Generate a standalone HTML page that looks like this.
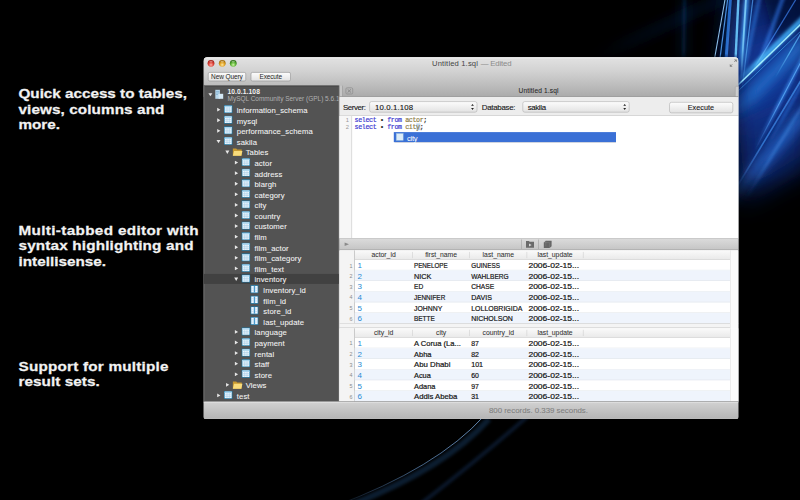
<!DOCTYPE html>
<html><head><meta charset="utf-8">
<style>
*{margin:0;padding:0}
html,body{width:800px;height:500px;overflow:hidden;background:#000}
svg{display:block;font-family:"Liberation Sans",sans-serif}
</style></head><body>
<svg width="800" height="500" viewBox="0 0 800 500">
<defs>
<linearGradient id="gTitle" x1="0" y1="0" x2="0" y2="1">
 <stop offset="0" stop-color="#e2e2e2"/><stop offset="0.35" stop-color="#d2d2d2"/><stop offset="0.7" stop-color="#bdbdbd"/><stop offset="1" stop-color="#aaaaaa"/>
</linearGradient>
<linearGradient id="gStatus" x1="0" y1="0" x2="0" y2="1">
 <stop offset="0" stop-color="#d2d2d2"/><stop offset="1" stop-color="#b4b4b4"/>
</linearGradient>
<linearGradient id="gDiv" x1="0" y1="0" x2="0" y2="1">
 <stop offset="0" stop-color="#dcdcdc"/><stop offset="1" stop-color="#c4c4c4"/>
</linearGradient>
<linearGradient id="gBtn" x1="0" y1="0" x2="0" y2="1">
 <stop offset="0" stop-color="#fdfdfd"/><stop offset="1" stop-color="#e2e2e2"/>
</linearGradient>
<linearGradient id="gRow" x1="0" y1="0" x2="0" y2="1">
 <stop offset="0" stop-color="#f4f4f4"/><stop offset="1" stop-color="#e6e6e6"/>
</linearGradient>
<linearGradient id="gHdr" x1="0" y1="0" x2="0" y2="1">
 <stop offset="0" stop-color="#fafafa"/><stop offset="1" stop-color="#e9e9e9"/>
</linearGradient>
<clipPath id="winclip"><path d="M207.5 57.2 H734.5 Q738.5 57.2 738.5 61.2 V416.9 Q738.5 418.9 736.5 418.9 H205.5 Q203.5 418.9 203.5 416.9 V61.2 Q203.5 57.2 207.5 57.2 Z"/></clipPath>
</defs>

<defs>
<radialGradient id="mk" cx="775" cy="60" r="200" gradientUnits="userSpaceOnUse" gradientTransform="translate(775 60) scale(1 1.05) translate(-775 -60)">
 <stop offset="0" stop-color="#fff"/><stop offset="0.55" stop-color="#fff"/><stop offset="1" stop-color="#000"/>
</radialGradient>
<mask id="bgmask" maskUnits="userSpaceOnUse" x="0" y="0" width="800" height="500"><rect x="560" y="0" width="240" height="300" fill="url(#mk)"/></mask>
<filter id="bl1" filterUnits="userSpaceOnUse" x="0" y="0" width="800" height="500"><feGaussianBlur stdDeviation="0.5"/></filter>
<filter id="bl2" filterUnits="userSpaceOnUse" x="0" y="0" width="800" height="500"><feGaussianBlur stdDeviation="1.8"/></filter>
<filter id="bl3" filterUnits="userSpaceOnUse" x="0" y="0" width="800" height="500"><feGaussianBlur stdDeviation="6"/></filter>
<filter id="bl4" filterUnits="userSpaceOnUse" x="0" y="0" width="800" height="500"><feGaussianBlur stdDeviation="12"/></filter>
</defs>
<g id="bg" mask="url(#bgmask)">
<path d="M732 -10 L810 -10 L810 150 L745 190 L738 120 L725 60 Z" fill="#0a2670" filter="url(#bl4)"/>
<path d="M740 40 L810 20 L810 100 L740 140 Z" fill="#1240a8" filter="url(#bl4)" opacity="0.6"/>
<path d="M739 120 L810 90 L810 170 L739 210 Z" fill="#0c2a78" filter="url(#bl4)" opacity="0.5"/>
<path d="M762 -10 L810 -10 L810 22 L775 40 Z" fill="#040c30" filter="url(#bl3)" opacity="0.75"/>
<linearGradient id="sg1" gradientUnits="userSpaceOnUse" x1="806" y1="112" x2="720" y2="212"><stop offset="0" stop-color="#2a6ae0" stop-opacity="0.75"/><stop offset="0.2" stop-color="#2a6ae0" stop-opacity="0.75"/><stop offset="0.5" stop-color="#2a6ae0" stop-opacity="0.75"/><stop offset="1" stop-color="#2a6ae0" stop-opacity="0"/></linearGradient>
<path d="M806 112 L720 212" stroke="url(#sg1)" stroke-width="9" fill="none" filter="url(#bl3)" style="mix-blend-mode:screen"/>
<linearGradient id="sg2" gradientUnits="userSpaceOnUse" x1="806" y1="40" x2="730" y2="118"><stop offset="0" stop-color="#1e78e0" stop-opacity="0.6"/><stop offset="0.15" stop-color="#1e78e0" stop-opacity="0.6"/><stop offset="0.7" stop-color="#1e78e0" stop-opacity="0.6"/><stop offset="1" stop-color="#1e78e0" stop-opacity="0"/></linearGradient>
<path d="M806 40 L730 118" stroke="url(#sg2)" stroke-width="12" fill="none" filter="url(#bl3)" style="mix-blend-mode:screen"/>
<linearGradient id="sg3" gradientUnits="userSpaceOnUse" x1="742" y1="-5" x2="728" y2="75"><stop offset="0" stop-color="#2a70f0" stop-opacity="0.35"/><stop offset="0.15" stop-color="#2a70f0" stop-opacity="0.35"/><stop offset="0.7" stop-color="#2a70f0" stop-opacity="0.35"/><stop offset="1" stop-color="#2a70f0" stop-opacity="0"/></linearGradient>
<path d="M742 -5 L728 75" stroke="url(#sg3)" stroke-width="7" fill="none" filter="url(#bl3)" style="mix-blend-mode:screen"/>
<linearGradient id="sg4" gradientUnits="userSpaceOnUse" x1="684.5" y1="-2" x2="683.5" y2="60"><stop offset="0" stop-color="#1a4490" stop-opacity="0.4"/><stop offset="0.2" stop-color="#1a4490" stop-opacity="0.4"/><stop offset="0.9" stop-color="#1a4490" stop-opacity="0.4"/><stop offset="1" stop-color="#1a4490" stop-opacity="0"/></linearGradient>
<path d="M684.5 -2 L683.5 60" stroke="url(#sg4)" stroke-width="4" fill="none" filter="url(#bl3)" style="mix-blend-mode:screen"/>
<linearGradient id="sg5" gradientUnits="userSpaceOnUse" x1="684.5" y1="-2" x2="683.5" y2="60"><stop offset="0" stop-color="#12346e" stop-opacity="0.5"/><stop offset="0.2" stop-color="#12346e" stop-opacity="0.5"/><stop offset="0.9" stop-color="#12346e" stop-opacity="0.5"/><stop offset="1" stop-color="#12346e" stop-opacity="0"/></linearGradient>
<path d="M684.5 -2 L683.5 60" stroke="url(#sg5)" stroke-width="2" fill="none" filter="url(#bl2)" style="mix-blend-mode:screen"/>
<linearGradient id="sg6" gradientUnits="userSpaceOnUse" x1="728" y1="-4" x2="585" y2="62"><stop offset="0" stop-color="#0e2a62" stop-opacity="0.6"/><stop offset="0.3" stop-color="#0e2a62" stop-opacity="0.6"/><stop offset="0.7" stop-color="#0e2a62" stop-opacity="0.6"/><stop offset="1" stop-color="#0e2a62" stop-opacity="0"/></linearGradient>
<path d="M728 -4 L585 62" stroke="url(#sg6)" stroke-width="5" fill="none" filter="url(#bl3)" style="mix-blend-mode:screen"/>
<linearGradient id="sg7" gradientUnits="userSpaceOnUse" x1="806" y1="16" x2="736" y2="84"><stop offset="0" stop-color="#3aa8ff" stop-opacity="0.8"/><stop offset="0.15" stop-color="#3aa8ff" stop-opacity="0.8"/><stop offset="0.7" stop-color="#3aa8ff" stop-opacity="0.8"/><stop offset="1" stop-color="#3aa8ff" stop-opacity="0"/></linearGradient>
<path d="M806 16 L736 84" stroke="url(#sg7)" stroke-width="6" fill="none" filter="url(#bl2)" style="mix-blend-mode:screen"/>
<linearGradient id="sg8" gradientUnits="userSpaceOnUse" x1="784" y1="-5" x2="755" y2="75"><stop offset="0" stop-color="#2a68e0" stop-opacity="0.6"/><stop offset="0.15" stop-color="#2a68e0" stop-opacity="0.6"/><stop offset="0.7" stop-color="#2a68e0" stop-opacity="0.6"/><stop offset="1" stop-color="#2a68e0" stop-opacity="0"/></linearGradient>
<path d="M784 -5 L755 75" stroke="url(#sg8)" stroke-width="4" fill="none" filter="url(#bl2)" style="mix-blend-mode:screen"/>
<linearGradient id="sg9" gradientUnits="userSpaceOnUse" x1="804" y1="55" x2="755" y2="150"><stop offset="0" stop-color="#2a70ea" stop-opacity="0.7"/><stop offset="0.2" stop-color="#2a70ea" stop-opacity="0.7"/><stop offset="0.55" stop-color="#2a70ea" stop-opacity="0.7"/><stop offset="1" stop-color="#2a70ea" stop-opacity="0"/></linearGradient>
<path d="M804 55 L755 150" stroke="url(#sg9)" stroke-width="3.5" fill="none" filter="url(#bl2)" style="mix-blend-mode:screen"/>
<linearGradient id="sg10" gradientUnits="userSpaceOnUse" x1="804" y1="80" x2="765" y2="150"><stop offset="0" stop-color="#2060d8" stop-opacity="0.5"/><stop offset="0.2" stop-color="#2060d8" stop-opacity="0.5"/><stop offset="0.5" stop-color="#2060d8" stop-opacity="0.5"/><stop offset="1" stop-color="#2060d8" stop-opacity="0"/></linearGradient>
<path d="M804 80 L765 150" stroke="url(#sg10)" stroke-width="3" fill="none" filter="url(#bl2)" style="mix-blend-mode:screen"/>
<linearGradient id="sg11" gradientUnits="userSpaceOnUse" x1="747" y1="-5" x2="740" y2="75"><stop offset="0" stop-color="#3a90ff" stop-opacity="0.7"/><stop offset="0.15" stop-color="#3a90ff" stop-opacity="0.7"/><stop offset="0.7" stop-color="#3a90ff" stop-opacity="0.7"/><stop offset="1" stop-color="#3a90ff" stop-opacity="0"/></linearGradient>
<path d="M747 -5 L740 75" stroke="url(#sg11)" stroke-width="5" fill="none" filter="url(#bl2)" style="mix-blend-mode:screen"/>
<linearGradient id="sg12" gradientUnits="userSpaceOnUse" x1="760" y1="-5" x2="742" y2="80"><stop offset="0" stop-color="#2a6ce0" stop-opacity="0.5"/><stop offset="0.15" stop-color="#2a6ce0" stop-opacity="0.5"/><stop offset="0.7" stop-color="#2a6ce0" stop-opacity="0.5"/><stop offset="1" stop-color="#2a6ce0" stop-opacity="0"/></linearGradient>
<path d="M760 -5 L742 80" stroke="url(#sg12)" stroke-width="4" fill="none" filter="url(#bl2)" style="mix-blend-mode:screen"/>
<linearGradient id="sg13" gradientUnits="userSpaceOnUse" x1="725.3" y1="-2" x2="714.3" y2="60"><stop offset="0" stop-color="#9ad0ff" stop-opacity="0.9"/><stop offset="0.2" stop-color="#9ad0ff" stop-opacity="0.9"/><stop offset="0.9" stop-color="#9ad0ff" stop-opacity="0.9"/><stop offset="1" stop-color="#9ad0ff" stop-opacity="0"/></linearGradient>
<path d="M725.3 -2 L714.3 60" stroke="url(#sg13)" stroke-width="1.1" fill="none" filter="url(#bl1)" style="mix-blend-mode:screen"/>
<linearGradient id="sg14" gradientUnits="userSpaceOnUse" x1="727.8" y1="-2" x2="719.8" y2="60"><stop offset="0" stop-color="#5aa0ff" stop-opacity="0.85"/><stop offset="0.2" stop-color="#5aa0ff" stop-opacity="0.85"/><stop offset="0.9" stop-color="#5aa0ff" stop-opacity="0.85"/><stop offset="1" stop-color="#5aa0ff" stop-opacity="0"/></linearGradient>
<path d="M727.8 -2 L719.8 60" stroke="url(#sg14)" stroke-width="1.2" fill="none" filter="url(#bl1)" style="mix-blend-mode:screen"/>
<linearGradient id="sg15" gradientUnits="userSpaceOnUse" x1="730.5" y1="-2" x2="726" y2="60"><stop offset="0" stop-color="#2a70e0" stop-opacity="0.8"/><stop offset="0.2" stop-color="#2a70e0" stop-opacity="0.8"/><stop offset="0.9" stop-color="#2a70e0" stop-opacity="0.8"/><stop offset="1" stop-color="#2a70e0" stop-opacity="0"/></linearGradient>
<path d="M730.5 -2 L726 60" stroke="url(#sg15)" stroke-width="3" fill="none" filter="url(#bl1)" style="mix-blend-mode:screen"/>
<linearGradient id="sg16" gradientUnits="userSpaceOnUse" x1="738.5" y1="-2" x2="735.5" y2="60"><stop offset="0" stop-color="#60c0ff" stop-opacity="0.9"/><stop offset="0.2" stop-color="#60c0ff" stop-opacity="0.9"/><stop offset="0.9" stop-color="#60c0ff" stop-opacity="0.9"/><stop offset="1" stop-color="#60c0ff" stop-opacity="0"/></linearGradient>
<path d="M738.5 -2 L735.5 60" stroke="url(#sg16)" stroke-width="2.4" fill="none" filter="url(#bl1)" style="mix-blend-mode:screen"/>
<linearGradient id="sg17" gradientUnits="userSpaceOnUse" x1="746" y1="-2" x2="741" y2="80"><stop offset="0" stop-color="#6ab8ff" stop-opacity="0.8"/><stop offset="0.2" stop-color="#6ab8ff" stop-opacity="0.8"/><stop offset="0.5" stop-color="#6ab8ff" stop-opacity="0.8"/><stop offset="1" stop-color="#6ab8ff" stop-opacity="0"/></linearGradient>
<path d="M746 -2 L741 80" stroke="url(#sg17)" stroke-width="1.8" fill="none" filter="url(#bl1)" style="mix-blend-mode:screen"/>
<linearGradient id="sg18" gradientUnits="userSpaceOnUse" x1="753" y1="-2" x2="742" y2="90"><stop offset="0" stop-color="#4a98ff" stop-opacity="0.7"/><stop offset="0.2" stop-color="#4a98ff" stop-opacity="0.7"/><stop offset="0.5" stop-color="#4a98ff" stop-opacity="0.7"/><stop offset="1" stop-color="#4a98ff" stop-opacity="0"/></linearGradient>
<path d="M753 -2 L742 90" stroke="url(#sg18)" stroke-width="1.2" fill="none" filter="url(#bl1)" style="mix-blend-mode:screen"/>
<linearGradient id="sg19" gradientUnits="userSpaceOnUse" x1="798" y1="-4" x2="750" y2="75"><stop offset="0" stop-color="#3a78f0" stop-opacity="0.7"/><stop offset="0.2" stop-color="#3a78f0" stop-opacity="0.7"/><stop offset="0.65" stop-color="#3a78f0" stop-opacity="0.7"/><stop offset="1" stop-color="#3a78f0" stop-opacity="0"/></linearGradient>
<path d="M798 -4 L750 75" stroke="url(#sg19)" stroke-width="1.2" fill="none" filter="url(#bl1)" style="mix-blend-mode:screen"/>
<linearGradient id="sg20" gradientUnits="userSpaceOnUse" x1="804" y1="21" x2="736" y2="87"><stop offset="0" stop-color="#90e0ff" stop-opacity="0.95"/><stop offset="0.2" stop-color="#90e0ff" stop-opacity="0.95"/><stop offset="0.9" stop-color="#90e0ff" stop-opacity="0.95"/><stop offset="1" stop-color="#90e0ff" stop-opacity="0"/></linearGradient>
<path d="M804 21 L736 87" stroke="url(#sg20)" stroke-width="1.5" fill="none" filter="url(#bl1)" style="mix-blend-mode:screen"/>
<linearGradient id="sg21" gradientUnits="userSpaceOnUse" x1="804" y1="28" x2="736" y2="93"><stop offset="0" stop-color="#3a9cf0" stop-opacity="0.6"/><stop offset="0.2" stop-color="#3a9cf0" stop-opacity="0.6"/><stop offset="0.9" stop-color="#3a9cf0" stop-opacity="0.6"/><stop offset="1" stop-color="#3a9cf0" stop-opacity="0"/></linearGradient>
<path d="M804 28 L736 93" stroke="url(#sg21)" stroke-width="0.9" fill="none" filter="url(#bl1)" style="mix-blend-mode:screen"/>
<linearGradient id="sg22" gradientUnits="userSpaceOnUse" x1="804" y1="28" x2="775" y2="78"><stop offset="0" stop-color="#4aa0ff" stop-opacity="0.7"/><stop offset="0.2" stop-color="#4aa0ff" stop-opacity="0.7"/><stop offset="0.5" stop-color="#4aa0ff" stop-opacity="0.7"/><stop offset="1" stop-color="#4aa0ff" stop-opacity="0"/></linearGradient>
<path d="M804 28 L775 78" stroke="url(#sg22)" stroke-width="1.2" fill="none" filter="url(#bl1)" style="mix-blend-mode:screen"/>
<linearGradient id="sg23" gradientUnits="userSpaceOnUse" x1="803" y1="58" x2="755" y2="150"><stop offset="0" stop-color="#4a8cff" stop-opacity="0.7"/><stop offset="0.15" stop-color="#4a8cff" stop-opacity="0.7"/><stop offset="0.5" stop-color="#4a8cff" stop-opacity="0.7"/><stop offset="1" stop-color="#4a8cff" stop-opacity="0"/></linearGradient>
<path d="M803 58 L755 150" stroke="url(#sg23)" stroke-width="1.1" fill="none" filter="url(#bl1)" style="mix-blend-mode:screen"/>
<linearGradient id="sg24" gradientUnits="userSpaceOnUse" x1="806" y1="72" x2="735" y2="190"><stop offset="0" stop-color="#3a80f0" stop-opacity="0.65"/><stop offset="0.2" stop-color="#3a80f0" stop-opacity="0.65"/><stop offset="0.6" stop-color="#3a80f0" stop-opacity="0.65"/><stop offset="1" stop-color="#3a80f0" stop-opacity="0"/></linearGradient>
<path d="M806 72 L735 190" stroke="url(#sg24)" stroke-width="1.6" fill="none" filter="url(#bl1)" style="mix-blend-mode:screen"/>
<linearGradient id="sg25" gradientUnits="userSpaceOnUse" x1="806" y1="100" x2="745" y2="200"><stop offset="0" stop-color="#2a6ad8" stop-opacity="0.55"/><stop offset="0.2" stop-color="#2a6ad8" stop-opacity="0.55"/><stop offset="0.6" stop-color="#2a6ad8" stop-opacity="0.55"/><stop offset="1" stop-color="#2a6ad8" stop-opacity="0"/></linearGradient>
<path d="M806 100 L745 200" stroke="url(#sg25)" stroke-width="2.2" fill="none" filter="url(#bl2)" style="mix-blend-mode:screen"/>
</g>
<linearGradient id="bsg" gradientUnits="userSpaceOnUse" x1="340" y1="500" x2="486" y2="416"><stop offset="0" stop-color="#5a88c0" stop-opacity="0.1"/><stop offset="0.5" stop-color="#6a9ad0" stop-opacity="0.7"/><stop offset="1" stop-color="#78a8dc" stop-opacity="0.95"/></linearGradient>
<path d="M335 506 Q437 468 484 416" stroke="#24548a" stroke-width="6" fill="none" opacity="0.35" filter="url(#bl2)" transform="translate(5,3)"/>
<path d="M335 506 Q437 468 484 416" stroke="url(#bsg)" stroke-width="0.9" fill="none" filter="url(#bl1)"/>
<path d="M418 506 Q480 458 528 416" stroke="#163a6a" stroke-width="4" fill="none" opacity="0.4" filter="url(#bl2)"/>
<g transform="translate(18.5,97.5) scale(1.14,1)">
<text x="0" y="0" font-size="13.4" fill="#f2f2f2" font-weight="bold" textLength="147.72" lengthAdjust="spacing" stroke="#f2f2f2" stroke-width="0.25">Quick access to tables,</text>
</g>
<g transform="translate(18.5,113.5) scale(1.14,1)">
<text x="0" y="0" font-size="13.4" fill="#f2f2f2" font-weight="bold" textLength="127.98" lengthAdjust="spacing" stroke="#f2f2f2" stroke-width="0.25">views, columns and</text>
</g>
<g transform="translate(18.5,129.4) scale(1.14,1)">
<text x="0" y="0" font-size="13.4" fill="#f2f2f2" font-weight="bold" textLength="36.4" lengthAdjust="spacing" stroke="#f2f2f2" stroke-width="0.25">more.</text>
</g>
<g transform="translate(18.5,234.5) scale(1.14,1)">
<text x="0" y="0" font-size="13.4" fill="#f2f2f2" font-weight="bold" textLength="157.89" lengthAdjust="spacing" stroke="#f2f2f2" stroke-width="0.25">Multi-tabbed editor with</text>
</g>
<g transform="translate(18.5,250) scale(1.14,1)">
<text x="0" y="0" font-size="13.4" fill="#f2f2f2" font-weight="bold" textLength="153.51" lengthAdjust="spacing" stroke="#f2f2f2" stroke-width="0.25">syntax highlighting and</text>
</g>
<g transform="translate(18.5,266) scale(1.14,1)">
<text x="0" y="0" font-size="13.4" fill="#f2f2f2" font-weight="bold" textLength="76.75" lengthAdjust="spacing" stroke="#f2f2f2" stroke-width="0.25">intellisense.</text>
</g>
<g transform="translate(18.5,370.75) scale(1.14,1)">
<text x="0" y="0" font-size="13.4" fill="#f2f2f2" font-weight="bold" textLength="131.58" lengthAdjust="spacing" stroke="#f2f2f2" stroke-width="0.25">Support for multiple</text>
</g>
<g transform="translate(18.5,386) scale(1.14,1)">
<text x="0" y="0" font-size="13.4" fill="#f2f2f2" font-weight="bold" textLength="71.27" lengthAdjust="spacing" stroke="#f2f2f2" stroke-width="0.25">result sets.</text>
</g>
<g clip-path="url(#winclip)">
<rect x="203.5" y="57.2" width="535.0" height="361.7" fill="#fff"/>
<rect x="203.5" y="57.2" width="535.0" height="39.8" fill="url(#gTitle)"/>
<rect x="203.5" y="57.2" width="535.0" height="1.1" fill="#f6f6f6"/>
<radialGradient id="tl0" cx="0.5" cy="0.72" r="0.62"><stop offset="0" stop-color="#ffb0a8"/><stop offset="0.55" stop-color="#e0463c"/><stop offset="1" stop-color="#a41e16"/></radialGradient>
<circle cx="211" cy="63.3" r="3.4" fill="url(#tl0)"/><ellipse cx="211" cy="61.6" rx="1.6" ry="0.9" fill="#fff" opacity="0.35"/>
<radialGradient id="tl1" cx="0.5" cy="0.72" r="0.62"><stop offset="0" stop-color="#ffe8a0"/><stop offset="0.55" stop-color="#e2a428"/><stop offset="1" stop-color="#a26c0c"/></radialGradient>
<circle cx="222.25" cy="63.3" r="3.4" fill="url(#tl1)"/><ellipse cx="222.25" cy="61.6" rx="1.6" ry="0.9" fill="#fff" opacity="0.35"/>
<radialGradient id="tl2" cx="0.5" cy="0.72" r="0.62"><stop offset="0" stop-color="#d0f4a8"/><stop offset="0.55" stop-color="#62b83a"/><stop offset="1" stop-color="#2e7418"/></radialGradient>
<circle cx="233.25" cy="63.3" r="3.4" fill="url(#tl2)"/><ellipse cx="233.25" cy="61.6" rx="1.6" ry="0.9" fill="#fff" opacity="0.35"/>
<text x="432" y="65.9" font-size="7.6" fill="#444" textLength="45.9" lengthAdjust="spacing" >Untitled 1.sql</text>
<text x="480.7" y="65.9" font-size="7.8" fill="#8a8a8a" textLength="30.9" lengthAdjust="spacing" >— Edited</text>
<rect x="208.25" y="72.4" width="37.5" height="8.6" rx="1.5" fill="url(#gBtn)" stroke="#929292" stroke-width="0.6"/>
<text x="211.1" y="79.3" font-size="6.5" fill="#262626" textLength="31.6" lengthAdjust="spacing" >New Query</text>
<rect x="251" y="72.4" width="39.5" height="8.6" rx="1.5" fill="url(#gBtn)" stroke="#929292" stroke-width="0.6"/>
<text x="259.5" y="79.3" font-size="6.5" fill="#262626" textLength="22.5" lengthAdjust="spacing" >Execute</text>
<rect x="203.5" y="85.65" width="135.3" height="315.95000000000005" fill="#535353"/>
<rect x="203.5" y="85.65" width="135.3" height="0.6" fill="#333"/>
<rect x="203.5" y="85.65" width="1.3" height="315.95000000000005" fill="#636363"/>
<path d="M208.4 93.3 L212.4 93.3 L210.4 96.3 Z" fill="#e6e6e6"/>
<rect x="215.3" y="89.8" width="4.6" height="9" fill="#b8d8ec"/><rect x="218.6" y="93.8" width="4.6" height="5" fill="#d4e8f4"/><path d="M216 91.5h3.2M216 93h3.2M216 94.5h2" stroke="#6a9cc0" stroke-width="0.5"/>
<text x="227.5" y="93.9" font-size="6.7" fill="#f2f2f2" font-weight="bold" textLength="32.4" lengthAdjust="spacing" >10.0.1.108</text>
<text x="227.5" y="100.9" font-size="6.5" fill="#b0b0b0" textLength="112" lengthAdjust="spacing" >MySQL Community Server (GPL) 5.6.1</text>
<path d="M217.2 107.75 L220.39999999999998 109.65 L217.2 111.55000000000001 Z" fill="#e6e6e6"/>
<rect x="224.0" y="105.25" width="8.4" height="7.8" fill="#1a78a8"/><rect x="224.7" y="105.85" width="7" height="6.6" fill="#eef8ff"/><rect x="224.7" y="105.85" width="7" height="1.5" fill="#a8d4ee"/><path d="M227.0 107.35V112.45M229.3 107.35V112.45M224.7 109.05H231.7M224.7 110.75H231.7" stroke="#9cc6e2" stroke-width="0.5"/>
<text x="236.8" y="113.05000000000001" font-size="7.7" fill="#f2f2f2" letter-spacing="0.09" stroke="#f2f2f2" stroke-width="0.08">information_schema</text>
<path d="M217.2 118.33500000000001 L220.39999999999998 120.23500000000001 L217.2 122.13500000000002 Z" fill="#e6e6e6"/>
<rect x="224.0" y="115.83500000000001" width="8.4" height="7.8" fill="#1a78a8"/><rect x="224.7" y="116.435" width="7" height="6.6" fill="#eef8ff"/><rect x="224.7" y="116.435" width="7" height="1.5" fill="#a8d4ee"/><path d="M227.0 117.935V123.03500000000001M229.3 117.935V123.03500000000001M224.7 119.635H231.7M224.7 121.33500000000001H231.7" stroke="#9cc6e2" stroke-width="0.5"/>
<text x="236.8" y="123.63500000000002" font-size="7.7" fill="#f2f2f2" letter-spacing="0.09" stroke="#f2f2f2" stroke-width="0.08">mysql</text>
<path d="M217.2 128.92 L220.39999999999998 130.82 L217.2 132.72 Z" fill="#e6e6e6"/>
<rect x="224.0" y="126.41999999999999" width="8.4" height="7.8" fill="#1a78a8"/><rect x="224.7" y="127.01999999999998" width="7" height="6.6" fill="#eef8ff"/><rect x="224.7" y="127.01999999999998" width="7" height="1.5" fill="#a8d4ee"/><path d="M227.0 128.51999999999998V133.61999999999998M229.3 128.51999999999998V133.61999999999998M224.7 130.22H231.7M224.7 131.92H231.7" stroke="#9cc6e2" stroke-width="0.5"/>
<text x="236.8" y="134.22" font-size="7.7" fill="#f2f2f2" letter-spacing="0.09" stroke="#f2f2f2" stroke-width="0.08">performance_schema</text>
<path d="M216.5 140.005 L220.5 140.005 L218.5 143.305 Z" fill="#e6e6e6"/>
<rect x="224.0" y="137.005" width="8.4" height="7.8" fill="#1a78a8"/><rect x="224.7" y="137.605" width="7" height="6.6" fill="#eef8ff"/><rect x="224.7" y="137.605" width="7" height="1.5" fill="#a8d4ee"/><path d="M227.0 139.105V144.20499999999998M229.3 139.105V144.20499999999998M224.7 140.805H231.7M224.7 142.505H231.7" stroke="#9cc6e2" stroke-width="0.5"/>
<text x="236.8" y="144.805" font-size="7.7" fill="#f2f2f2" letter-spacing="0.09" stroke="#f2f2f2" stroke-width="0.08">sakila</text>
<path d="M225.35 150.59 L229.35 150.59 L227.35 153.89000000000001 Z" fill="#e6e6e6"/>
<path d="M232.85 148.59 h3.4 l0.9 1 h4.6 v6.2 h-8.9 Z" fill="#c89a30"/><path d="M234.04999999999998 150.99 h8.4 l-1.2 4.8 h-8.4 Z" fill="#f8dc7c"/>
<text x="245.65" y="155.39000000000001" font-size="7.7" fill="#f2f2f2" letter-spacing="0.09" stroke="#f2f2f2" stroke-width="0.08">Tables</text>
<path d="M234.89999999999998 160.675 L238.09999999999997 162.57500000000002 L234.89999999999998 164.47500000000002 Z" fill="#e6e6e6"/>
<rect x="241.7" y="158.175" width="8.4" height="7.8" fill="#1a78a8"/><rect x="242.39999999999998" y="158.775" width="7" height="6.6" fill="#eef8ff"/><rect x="242.39999999999998" y="158.775" width="7" height="1.5" fill="#a8d4ee"/><path d="M244.7 160.275V165.375M247.0 160.275V165.375M242.39999999999998 161.97500000000002H249.39999999999998M242.39999999999998 163.675H249.39999999999998" stroke="#9cc6e2" stroke-width="0.5"/>
<text x="254.5" y="165.97500000000002" font-size="7.7" fill="#f2f2f2" letter-spacing="0.09" stroke="#f2f2f2" stroke-width="0.08">actor</text>
<path d="M234.89999999999998 171.26000000000002 L238.09999999999997 173.16000000000003 L234.89999999999998 175.06000000000003 Z" fill="#e6e6e6"/>
<rect x="241.7" y="168.76000000000002" width="8.4" height="7.8" fill="#1a78a8"/><rect x="242.39999999999998" y="169.36" width="7" height="6.6" fill="#eef8ff"/><rect x="242.39999999999998" y="169.36" width="7" height="1.5" fill="#a8d4ee"/><path d="M244.7 170.86V175.96M247.0 170.86V175.96M242.39999999999998 172.56000000000003H249.39999999999998M242.39999999999998 174.26000000000002H249.39999999999998" stroke="#9cc6e2" stroke-width="0.5"/>
<text x="254.5" y="176.56000000000003" font-size="7.7" fill="#f2f2f2" letter-spacing="0.09" stroke="#f2f2f2" stroke-width="0.08">address</text>
<path d="M234.89999999999998 181.845 L238.09999999999997 183.745 L234.89999999999998 185.645 Z" fill="#e6e6e6"/>
<rect x="241.7" y="179.345" width="8.4" height="7.8" fill="#1a78a8"/><rect x="242.39999999999998" y="179.945" width="7" height="6.6" fill="#eef8ff"/><rect x="242.39999999999998" y="179.945" width="7" height="1.5" fill="#a8d4ee"/><path d="M244.7 181.445V186.545M247.0 181.445V186.545M242.39999999999998 183.145H249.39999999999998M242.39999999999998 184.845H249.39999999999998" stroke="#9cc6e2" stroke-width="0.5"/>
<text x="254.5" y="187.145" font-size="7.7" fill="#f2f2f2" letter-spacing="0.09" stroke="#f2f2f2" stroke-width="0.08">blargh</text>
<path d="M234.89999999999998 192.43 L238.09999999999997 194.33 L234.89999999999998 196.23000000000002 Z" fill="#e6e6e6"/>
<rect x="241.7" y="189.93" width="8.4" height="7.8" fill="#1a78a8"/><rect x="242.39999999999998" y="190.53" width="7" height="6.6" fill="#eef8ff"/><rect x="242.39999999999998" y="190.53" width="7" height="1.5" fill="#a8d4ee"/><path d="M244.7 192.03V197.13M247.0 192.03V197.13M242.39999999999998 193.73000000000002H249.39999999999998M242.39999999999998 195.43H249.39999999999998" stroke="#9cc6e2" stroke-width="0.5"/>
<text x="254.5" y="197.73000000000002" font-size="7.7" fill="#f2f2f2" letter-spacing="0.09" stroke="#f2f2f2" stroke-width="0.08">category</text>
<path d="M234.89999999999998 203.01500000000001 L238.09999999999997 204.91500000000002 L234.89999999999998 206.81500000000003 Z" fill="#e6e6e6"/>
<rect x="241.7" y="200.51500000000001" width="8.4" height="7.8" fill="#1a78a8"/><rect x="242.39999999999998" y="201.115" width="7" height="6.6" fill="#eef8ff"/><rect x="242.39999999999998" y="201.115" width="7" height="1.5" fill="#a8d4ee"/><path d="M244.7 202.615V207.715M247.0 202.615V207.715M242.39999999999998 204.31500000000003H249.39999999999998M242.39999999999998 206.01500000000001H249.39999999999998" stroke="#9cc6e2" stroke-width="0.5"/>
<text x="254.5" y="208.31500000000003" font-size="7.7" fill="#f2f2f2" letter-spacing="0.09" stroke="#f2f2f2" stroke-width="0.08">city</text>
<path d="M234.89999999999998 213.6 L238.09999999999997 215.5 L234.89999999999998 217.4 Z" fill="#e6e6e6"/>
<rect x="241.7" y="211.1" width="8.4" height="7.8" fill="#1a78a8"/><rect x="242.39999999999998" y="211.7" width="7" height="6.6" fill="#eef8ff"/><rect x="242.39999999999998" y="211.7" width="7" height="1.5" fill="#a8d4ee"/><path d="M244.7 213.2V218.29999999999998M247.0 213.2V218.29999999999998M242.39999999999998 214.9H249.39999999999998M242.39999999999998 216.6H249.39999999999998" stroke="#9cc6e2" stroke-width="0.5"/>
<text x="254.5" y="218.9" font-size="7.7" fill="#f2f2f2" letter-spacing="0.09" stroke="#f2f2f2" stroke-width="0.08">country</text>
<path d="M234.89999999999998 224.185 L238.09999999999997 226.085 L234.89999999999998 227.985 Z" fill="#e6e6e6"/>
<rect x="241.7" y="221.685" width="8.4" height="7.8" fill="#1a78a8"/><rect x="242.39999999999998" y="222.285" width="7" height="6.6" fill="#eef8ff"/><rect x="242.39999999999998" y="222.285" width="7" height="1.5" fill="#a8d4ee"/><path d="M244.7 223.785V228.885M247.0 223.785V228.885M242.39999999999998 225.485H249.39999999999998M242.39999999999998 227.185H249.39999999999998" stroke="#9cc6e2" stroke-width="0.5"/>
<text x="254.5" y="229.485" font-size="7.7" fill="#f2f2f2" letter-spacing="0.09" stroke="#f2f2f2" stroke-width="0.08">customer</text>
<path d="M234.89999999999998 234.77 L238.09999999999997 236.67000000000002 L234.89999999999998 238.57000000000002 Z" fill="#e6e6e6"/>
<rect x="241.7" y="232.27" width="8.4" height="7.8" fill="#1a78a8"/><rect x="242.39999999999998" y="232.87" width="7" height="6.6" fill="#eef8ff"/><rect x="242.39999999999998" y="232.87" width="7" height="1.5" fill="#a8d4ee"/><path d="M244.7 234.37V239.47M247.0 234.37V239.47M242.39999999999998 236.07000000000002H249.39999999999998M242.39999999999998 237.77H249.39999999999998" stroke="#9cc6e2" stroke-width="0.5"/>
<text x="254.5" y="240.07000000000002" font-size="7.7" fill="#f2f2f2" letter-spacing="0.09" stroke="#f2f2f2" stroke-width="0.08">film</text>
<path d="M234.89999999999998 245.35500000000002 L238.09999999999997 247.25500000000002 L234.89999999999998 249.15500000000003 Z" fill="#e6e6e6"/>
<rect x="241.7" y="242.85500000000002" width="8.4" height="7.8" fill="#1a78a8"/><rect x="242.39999999999998" y="243.455" width="7" height="6.6" fill="#eef8ff"/><rect x="242.39999999999998" y="243.455" width="7" height="1.5" fill="#a8d4ee"/><path d="M244.7 244.955V250.055M247.0 244.955V250.055M242.39999999999998 246.65500000000003H249.39999999999998M242.39999999999998 248.35500000000002H249.39999999999998" stroke="#9cc6e2" stroke-width="0.5"/>
<text x="254.5" y="250.65500000000003" font-size="7.7" fill="#f2f2f2" letter-spacing="0.09" stroke="#f2f2f2" stroke-width="0.08">film_actor</text>
<path d="M234.89999999999998 255.94000000000003 L238.09999999999997 257.84000000000003 L234.89999999999998 259.74 Z" fill="#e6e6e6"/>
<rect x="241.7" y="253.44000000000003" width="8.4" height="7.8" fill="#1a78a8"/><rect x="242.39999999999998" y="254.04000000000002" width="7" height="6.6" fill="#eef8ff"/><rect x="242.39999999999998" y="254.04000000000002" width="7" height="1.5" fill="#a8d4ee"/><path d="M244.7 255.54000000000002V260.64000000000004M247.0 255.54000000000002V260.64000000000004M242.39999999999998 257.24H249.39999999999998M242.39999999999998 258.94000000000005H249.39999999999998" stroke="#9cc6e2" stroke-width="0.5"/>
<text x="254.5" y="261.24" font-size="7.7" fill="#f2f2f2" letter-spacing="0.09" stroke="#f2f2f2" stroke-width="0.08">film_category</text>
<path d="M234.89999999999998 266.52500000000003 L238.09999999999997 268.425 L234.89999999999998 270.325 Z" fill="#e6e6e6"/>
<rect x="241.7" y="264.02500000000003" width="8.4" height="7.8" fill="#1a78a8"/><rect x="242.39999999999998" y="264.62500000000006" width="7" height="6.6" fill="#eef8ff"/><rect x="242.39999999999998" y="264.62500000000006" width="7" height="1.5" fill="#a8d4ee"/><path d="M244.7 266.12500000000006V271.225M247.0 266.12500000000006V271.225M242.39999999999998 267.82500000000005H249.39999999999998M242.39999999999998 269.52500000000003H249.39999999999998" stroke="#9cc6e2" stroke-width="0.5"/>
<text x="254.5" y="271.825" font-size="7.7" fill="#f2f2f2" letter-spacing="0.09" stroke="#f2f2f2" stroke-width="0.08">film_text</text>
<rect x="203.5" y="273.90999999999997" width="135.3" height="9.985000000000001" fill="#414141"/>
<path d="M234.2 277.61 L238.2 277.61 L236.2 280.90999999999997 Z" fill="#e6e6e6"/>
<rect x="241.7" y="274.61" width="8.4" height="7.8" fill="#1a78a8"/><rect x="242.39999999999998" y="275.21000000000004" width="7" height="6.6" fill="#eef8ff"/><rect x="242.39999999999998" y="275.21000000000004" width="7" height="1.5" fill="#a8d4ee"/><path d="M244.7 276.71000000000004V281.81M247.0 276.71000000000004V281.81M242.39999999999998 278.41H249.39999999999998M242.39999999999998 280.11H249.39999999999998" stroke="#9cc6e2" stroke-width="0.5"/>
<text x="254.5" y="282.40999999999997" font-size="7.7" fill="#f2f2f2" letter-spacing="0.09" stroke="#f2f2f2" stroke-width="0.08">inventory</text>
<rect x="250.55" y="285.19500000000005" width="7.8" height="8" fill="#1a78a8"/><rect x="251.25" y="285.89500000000004" width="6.4" height="6.6" fill="#f0f8ff"/><rect x="253.75" y="285.89500000000004" width="1.4" height="6.6" fill="#4a98cc"/><path d="M251.25 288.095H253.75M251.25 290.2950000000001H253.75M255.15 288.095H257.65000000000003M255.15 290.2950000000001H257.65000000000003" stroke="#a8cce6" stroke-width="0.5"/>
<text x="263.35" y="292.995" font-size="7.7" fill="#f2f2f2" letter-spacing="0.09" stroke="#f2f2f2" stroke-width="0.08">inventory_id</text>
<rect x="250.55" y="295.7800000000001" width="7.8" height="8" fill="#1a78a8"/><rect x="251.25" y="296.4800000000001" width="6.4" height="6.6" fill="#f0f8ff"/><rect x="253.75" y="296.4800000000001" width="1.4" height="6.6" fill="#4a98cc"/><path d="M251.25 298.68000000000006H253.75M251.25 300.8800000000001H253.75M255.15 298.68000000000006H257.65000000000003M255.15 300.8800000000001H257.65000000000003" stroke="#a8cce6" stroke-width="0.5"/>
<text x="263.35" y="303.58000000000004" font-size="7.7" fill="#f2f2f2" letter-spacing="0.09" stroke="#f2f2f2" stroke-width="0.08">film_id</text>
<rect x="250.55" y="306.365" width="7.8" height="8" fill="#1a78a8"/><rect x="251.25" y="307.065" width="6.4" height="6.6" fill="#f0f8ff"/><rect x="253.75" y="307.065" width="1.4" height="6.6" fill="#4a98cc"/><path d="M251.25 309.265H253.75M251.25 311.46500000000003H253.75M255.15 309.265H257.65000000000003M255.15 311.46500000000003H257.65000000000003" stroke="#a8cce6" stroke-width="0.5"/>
<text x="263.35" y="314.16499999999996" font-size="7.7" fill="#f2f2f2" letter-spacing="0.09" stroke="#f2f2f2" stroke-width="0.08">store_id</text>
<rect x="250.55" y="316.95000000000005" width="7.8" height="8" fill="#1a78a8"/><rect x="251.25" y="317.65000000000003" width="6.4" height="6.6" fill="#f0f8ff"/><rect x="253.75" y="317.65000000000003" width="1.4" height="6.6" fill="#4a98cc"/><path d="M251.25 319.85H253.75M251.25 322.05000000000007H253.75M255.15 319.85H257.65000000000003M255.15 322.05000000000007H257.65000000000003" stroke="#a8cce6" stroke-width="0.5"/>
<text x="263.35" y="324.75" font-size="7.7" fill="#f2f2f2" letter-spacing="0.09" stroke="#f2f2f2" stroke-width="0.08">last_update</text>
<path d="M234.89999999999998 330.0350000000001 L238.09999999999997 331.93500000000006 L234.89999999999998 333.83500000000004 Z" fill="#e6e6e6"/>
<rect x="241.7" y="327.5350000000001" width="8.4" height="7.8" fill="#1a78a8"/><rect x="242.39999999999998" y="328.1350000000001" width="7" height="6.6" fill="#eef8ff"/><rect x="242.39999999999998" y="328.1350000000001" width="7" height="1.5" fill="#a8d4ee"/><path d="M244.7 329.6350000000001V334.73500000000007M247.0 329.6350000000001V334.73500000000007M242.39999999999998 331.3350000000001H249.39999999999998M242.39999999999998 333.0350000000001H249.39999999999998" stroke="#9cc6e2" stroke-width="0.5"/>
<text x="254.5" y="335.33500000000004" font-size="7.7" fill="#f2f2f2" letter-spacing="0.09" stroke="#f2f2f2" stroke-width="0.08">language</text>
<path d="M234.89999999999998 340.62 L238.09999999999997 342.52 L234.89999999999998 344.41999999999996 Z" fill="#e6e6e6"/>
<rect x="241.7" y="338.12" width="8.4" height="7.8" fill="#1a78a8"/><rect x="242.39999999999998" y="338.72" width="7" height="6.6" fill="#eef8ff"/><rect x="242.39999999999998" y="338.72" width="7" height="1.5" fill="#a8d4ee"/><path d="M244.7 340.22V345.32M247.0 340.22V345.32M242.39999999999998 341.92H249.39999999999998M242.39999999999998 343.62H249.39999999999998" stroke="#9cc6e2" stroke-width="0.5"/>
<text x="254.5" y="345.91999999999996" font-size="7.7" fill="#f2f2f2" letter-spacing="0.09" stroke="#f2f2f2" stroke-width="0.08">payment</text>
<path d="M234.89999999999998 351.20500000000004 L238.09999999999997 353.105 L234.89999999999998 355.005 Z" fill="#e6e6e6"/>
<rect x="241.7" y="348.70500000000004" width="8.4" height="7.8" fill="#1a78a8"/><rect x="242.39999999999998" y="349.30500000000006" width="7" height="6.6" fill="#eef8ff"/><rect x="242.39999999999998" y="349.30500000000006" width="7" height="1.5" fill="#a8d4ee"/><path d="M244.7 350.80500000000006V355.90500000000003M247.0 350.80500000000006V355.90500000000003M242.39999999999998 352.50500000000005H249.39999999999998M242.39999999999998 354.20500000000004H249.39999999999998" stroke="#9cc6e2" stroke-width="0.5"/>
<text x="254.5" y="356.505" font-size="7.7" fill="#f2f2f2" letter-spacing="0.09" stroke="#f2f2f2" stroke-width="0.08">rental</text>
<path d="M234.89999999999998 361.7900000000001 L238.09999999999997 363.69000000000005 L234.89999999999998 365.59000000000003 Z" fill="#e6e6e6"/>
<rect x="241.7" y="359.2900000000001" width="8.4" height="7.8" fill="#1a78a8"/><rect x="242.39999999999998" y="359.8900000000001" width="7" height="6.6" fill="#eef8ff"/><rect x="242.39999999999998" y="359.8900000000001" width="7" height="1.5" fill="#a8d4ee"/><path d="M244.7 361.3900000000001V366.49000000000007M247.0 361.3900000000001V366.49000000000007M242.39999999999998 363.0900000000001H249.39999999999998M242.39999999999998 364.7900000000001H249.39999999999998" stroke="#9cc6e2" stroke-width="0.5"/>
<text x="254.5" y="367.09000000000003" font-size="7.7" fill="#f2f2f2" letter-spacing="0.09" stroke="#f2f2f2" stroke-width="0.08">staff</text>
<path d="M234.89999999999998 372.375 L238.09999999999997 374.275 L234.89999999999998 376.17499999999995 Z" fill="#e6e6e6"/>
<rect x="241.7" y="369.875" width="8.4" height="7.8" fill="#1a78a8"/><rect x="242.39999999999998" y="370.475" width="7" height="6.6" fill="#eef8ff"/><rect x="242.39999999999998" y="370.475" width="7" height="1.5" fill="#a8d4ee"/><path d="M244.7 371.975V377.075M247.0 371.975V377.075M242.39999999999998 373.675H249.39999999999998M242.39999999999998 375.375H249.39999999999998" stroke="#9cc6e2" stroke-width="0.5"/>
<text x="254.5" y="377.67499999999995" font-size="7.7" fill="#f2f2f2" letter-spacing="0.09" stroke="#f2f2f2" stroke-width="0.08">store</text>
<path d="M226.04999999999998 382.96000000000004 L229.24999999999997 384.86 L226.04999999999998 386.76 Z" fill="#e6e6e6"/>
<path d="M232.85 381.46 h3.4 l0.9 1 h4.6 v6.2 h-8.9 Z" fill="#c89a30"/><path d="M234.04999999999998 383.86 h8.4 l-1.2 4.8 h-8.4 Z" fill="#f8dc7c"/>
<text x="245.65" y="388.26" font-size="7.7" fill="#f2f2f2" letter-spacing="0.09" stroke="#f2f2f2" stroke-width="0.08">Views</text>
<path d="M217.2 393.5450000000001 L220.39999999999998 395.44500000000005 L217.2 397.345 Z" fill="#e6e6e6"/>
<rect x="224.0" y="391.0450000000001" width="8.4" height="7.8" fill="#1a78a8"/><rect x="224.7" y="391.6450000000001" width="7" height="6.6" fill="#eef8ff"/><rect x="224.7" y="391.6450000000001" width="7" height="1.5" fill="#a8d4ee"/><path d="M227.0 393.1450000000001V398.24500000000006M229.3 393.1450000000001V398.24500000000006M224.7 394.8450000000001H231.7M224.7 396.5450000000001H231.7" stroke="#9cc6e2" stroke-width="0.5"/>
<text x="236.8" y="398.845" font-size="7.7" fill="#f2f2f2" letter-spacing="0.09" stroke="#f2f2f2" stroke-width="0.08">test</text>
<rect x="338.8" y="85.65" width="0.7" height="315.95000000000005" fill="#2e2e2e"/>
<rect x="339.5" y="85.65" width="3" height="11.3" fill="#c6c6c6"/><rect x="342.2" y="85.65" width="0.6" height="11.3" fill="#989898"/>
<rect x="345.9" y="87.8" width="6.8" height="6.2" rx="1.2" fill="none" stroke="#8c8c8c" stroke-width="0.7"/><path d="M347.6 89.3l3.4 3.2M351 89.3l-3.4 3.2" stroke="#8c8c8c" stroke-width="1"/>
<text x="518.5" y="93" font-size="6.6" fill="#262626" textLength="40" lengthAdjust="spacing" stroke="#262626" stroke-width="0.06">Untitled 1.sql</text>
<rect x="735.3" y="86.3" width="4" height="11" rx="1.2" fill="#cdcdcd" stroke="#9c9c9c" stroke-width="0.5"/>
<rect x="338.8" y="96.3" width="399.7" height="0.8" fill="#9a9a9a"/>
<path d="M729.8 66.8 L729.8 64 L732.6 66.8 Z M736.8 59.4 L734 59.4 L736.8 62.2 Z" fill="#808080"/><path d="M730.6 66 L732.4 64.2 M736 60.2 L734.2 62" stroke="#808080" stroke-width="0.8"/>
<rect x="339.5" y="97.1" width="399.7" height="18.5" fill="#ededed"/>
<rect x="339.5" y="115.2" width="399.7" height="0.7" fill="#c4c4c4"/>
<text x="343" y="109.6" font-size="7.9" fill="#1a1a1a" textLength="23" lengthAdjust="spacing" stroke="#1a1a1a" stroke-width="0.12">Server:</text>
<rect x="369.6" y="101.6" width="107.39999999999998" height="10.6" rx="2" fill="url(#gBtn)" stroke="#b0b0b0" stroke-width="0.6"/>
<text x="375" y="109.6" font-size="7.8" fill="#111" textLength="38" lengthAdjust="spacing" stroke="#111" stroke-width="0.1">10.0.1.108</text>
<path d="M471.1 105.8L472.5 103.9L473.9 105.8ZM471.1 108.1L472.5 110L473.9 108.1Z" fill="#222"/>
<text x="481.7" y="109.6" font-size="7.9" fill="#1a1a1a" textLength="33.8" lengthAdjust="spacing" stroke="#1a1a1a" stroke-width="0.12">Database:</text>
<rect x="522.8" y="101.6" width="106.40000000000009" height="10.6" rx="2" fill="url(#gBtn)" stroke="#b0b0b0" stroke-width="0.6"/>
<text x="527.7" y="109.6" font-size="7.8" fill="#111" textLength="18.3" lengthAdjust="spacing" stroke="#111" stroke-width="0.1">sakila</text>
<path d="M623.3000000000001 105.8L624.7 103.9L626.1 105.8ZM623.3000000000001 108.1L624.7 110L626.1 108.1Z" fill="#222"/>
<rect x="669.5" y="102.3" width="63.3" height="10.6" rx="2" fill="url(#gBtn)" stroke="#b0b0b0" stroke-width="0.6"/>
<text x="687.7" y="110.2" font-size="7.2" fill="#1a1a1a" textLength="26.3" lengthAdjust="spacing" stroke="#1a1a1a" stroke-width="0.12">Execute</text>
<rect x="339.5" y="115.9" width="399.7" height="122.4" fill="#fff"/>
<rect x="339.5" y="115.9" width="12.49999999999999" height="122.4" fill="#f7f7f7"/>
<rect x="351.4" y="115.9" width="0.7" height="122.4" fill="#d0d0d0"/>
<text x="345.8" y="122" font-size="5.8" fill="#999" >1</text>
<text x="345.8" y="129" font-size="5.8" fill="#999" >2</text>
<rect x="416.2" y="123.4" width="4.2" height="6.8" fill="#c0d8f2"/>
<text x="354.6" y="121.75" font-family="Liberation Mono" font-size="6.7" letter-spacing="-0.4" fill="#222" stroke-width="0.18"><tspan fill="#3a36d0" stroke="#3a36d0">select</tspan> <tspan stroke="#222">•</tspan> <tspan fill="#3a36d0" stroke="#3a36d0">from</tspan> <tspan fill="#8c7c44" stroke="#8c7c44">actor</tspan><tspan stroke="#222">;</tspan></text>
<text x="354.6" y="128.75" font-family="Liberation Mono" font-size="6.7" letter-spacing="-0.4" fill="#222" stroke-width="0.18"><tspan fill="#3a36d0" stroke="#3a36d0">select</tspan> <tspan stroke="#222">•</tspan> <tspan fill="#3a36d0" stroke="#3a36d0">from</tspan> <tspan fill="#8c7c44" stroke="#8c7c44">city</tspan><tspan stroke="#222">;</tspan></text>
<rect x="394.5" y="133" width="221.5" height="10" fill="#000" opacity="0.12"/>
<rect x="393.8" y="132.1" width="222.2" height="10" fill="#3a70d6"/>
<rect x="396.2" y="133.4" width="7" height="7" fill="#dcecf8" stroke="#8ab4dc" stroke-width="0.5"/>
<text x="407" y="140.6" font-size="7.6" fill="#fff" textLength="10.6" lengthAdjust="spacing" >city</text>
<rect x="339.5" y="238.3" width="399.7" height="11.8" fill="url(#gDiv)"/>
<rect x="339.5" y="238.3" width="399.7" height="0.6" fill="#b8b8b8"/>
<rect x="339.5" y="249.7" width="399.7" height="0.8" fill="#8c8c8c"/>
<path d="M344.6 242.4 L349 244.2 L344.6 246 Z" fill="#8a8a8a"/>
<rect x="521.4" y="239.5" width="0.6" height="9.5" fill="#a0a0a0"/><rect x="538.3" y="239.5" width="0.6" height="9.5" fill="#a0a0a0"/>
<path d="M526 241 h3 l0.6 0.8 h4.4 v6 h-8 Z" fill="#6a6a6a"/><path d="M529 243.4 L531.6 244.9 L529 246.4 Z" fill="#d8d8d8"/>
<path d="M543.8 242.6 l2-1.8 h5.8 v5.4 l-2 1.8 h-5.8 Z" fill="#666"/><path d="M545.8 240.8 v5.4 M543.8 242.6 h5.8 v5.4" stroke="#8a8a8a" stroke-width="0.4" fill="none"/>
<rect x="339.5" y="250.4" width="399.0" height="151.20000000000002" fill="#fff"/>
<rect x="354.7" y="250.4" width="375.3" height="9.3" fill="url(#gHdr)"/>
<rect x="354.7" y="259.09999999999997" width="375.3" height="0.6" fill="#cfcfcf"/>
<rect x="339.5" y="250.4" width="15.199999999999989" height="73.2" fill="#f4f4f4"/>
<rect x="354.09999999999997" y="250.4" width="0.7" height="73.2" fill="#b8b8b8"/>
<text x="383.6" y="257.0" font-size="6.8" fill="#333" text-anchor="middle" stroke="#333" stroke-width="0.06">actor_id</text>
<rect x="412.2" y="251.9" width="0.6" height="6.300000000000001" fill="#d0d0d0"/>
<text x="441.1" y="257.0" font-size="6.8" fill="#333" text-anchor="middle" stroke="#333" stroke-width="0.06">first_name</text>
<rect x="469.4" y="251.9" width="0.6" height="6.300000000000001" fill="#d0d0d0"/>
<text x="498.29999999999995" y="257.0" font-size="6.8" fill="#333" text-anchor="middle" stroke="#333" stroke-width="0.06">last_name</text>
<rect x="526.6" y="251.9" width="0.6" height="6.300000000000001" fill="#d0d0d0"/>
<text x="555.05" y="257.0" font-size="6.8" fill="#333" text-anchor="middle" stroke="#333" stroke-width="0.06">last_update</text>
<rect x="582.9000000000001" y="251.9" width="0.6" height="6.300000000000001" fill="#d0d0d0"/>
<rect x="354.7" y="269.84999999999997" width="375.3" height="0.5" fill="#dfe2e6"/>
<text x="349.4" y="267.5" font-size="5.4" fill="#8a8a8a" >1</text>
<text x="357.59999999999997" y="268.0" font-size="8" fill="#2a8ad2" >1</text>
<text x="414.0" y="268.09999999999997" font-size="7.8" fill="#141414" textLength="33.7" lengthAdjust="spacingAndGlyphs" stroke="#141414" stroke-width="0.2">PENELOPE</text>
<text x="471.2" y="268.09999999999997" font-size="7.8" fill="#141414" textLength="28.7" lengthAdjust="spacingAndGlyphs" stroke="#141414" stroke-width="0.2">GUINESS</text>
<text x="528.4" y="268.09999999999997" font-size="7.8" fill="#141414" textLength="50.7" lengthAdjust="spacingAndGlyphs" stroke="#141414" stroke-width="0.2">2006-02-15...</text>
<rect x="354.7" y="270.34999999999997" width="375.3" height="10.65" fill="#eff4fc"/>
<rect x="354.7" y="280.49999999999994" width="375.3" height="0.5" fill="#dfe2e6"/>
<text x="349.4" y="278.15" font-size="5.4" fill="#8a8a8a" >2</text>
<text x="357.59999999999997" y="278.65" font-size="8" fill="#2a8ad2" >2</text>
<text x="414.0" y="278.74999999999994" font-size="7.8" fill="#141414" textLength="17.5" lengthAdjust="spacingAndGlyphs" stroke="#141414" stroke-width="0.2">NICK</text>
<text x="471.2" y="278.74999999999994" font-size="7.8" fill="#141414" textLength="37.5" lengthAdjust="spacingAndGlyphs" stroke="#141414" stroke-width="0.2">WAHLBERG</text>
<text x="528.4" y="278.74999999999994" font-size="7.8" fill="#141414" textLength="50.7" lengthAdjust="spacingAndGlyphs" stroke="#141414" stroke-width="0.2">2006-02-15...</text>
<rect x="354.7" y="291.15" width="375.3" height="0.5" fill="#dfe2e6"/>
<text x="349.4" y="288.8" font-size="5.4" fill="#8a8a8a" >3</text>
<text x="357.59999999999997" y="289.3" font-size="8" fill="#2a8ad2" >3</text>
<text x="414.0" y="289.4" font-size="7.8" fill="#141414" textLength="9.25" lengthAdjust="spacingAndGlyphs" stroke="#141414" stroke-width="0.2">ED</text>
<text x="471.2" y="289.4" font-size="7.8" fill="#141414" textLength="23" lengthAdjust="spacingAndGlyphs" stroke="#141414" stroke-width="0.2">CHASE</text>
<text x="528.4" y="289.4" font-size="7.8" fill="#141414" textLength="50.7" lengthAdjust="spacingAndGlyphs" stroke="#141414" stroke-width="0.2">2006-02-15...</text>
<rect x="354.7" y="291.65" width="375.3" height="10.65" fill="#eff4fc"/>
<rect x="354.7" y="301.79999999999995" width="375.3" height="0.5" fill="#dfe2e6"/>
<text x="349.4" y="299.45" font-size="5.4" fill="#8a8a8a" >4</text>
<text x="357.59999999999997" y="299.95" font-size="8" fill="#2a8ad2" >4</text>
<text x="414.0" y="300.04999999999995" font-size="7.8" fill="#141414" textLength="31.25" lengthAdjust="spacingAndGlyphs" stroke="#141414" stroke-width="0.2">JENNIFER</text>
<text x="471.2" y="300.04999999999995" font-size="7.8" fill="#141414" textLength="20.75" lengthAdjust="spacingAndGlyphs" stroke="#141414" stroke-width="0.2">DAVIS</text>
<text x="528.4" y="300.04999999999995" font-size="7.8" fill="#141414" textLength="50.7" lengthAdjust="spacingAndGlyphs" stroke="#141414" stroke-width="0.2">2006-02-15...</text>
<rect x="354.7" y="312.45" width="375.3" height="0.5" fill="#dfe2e6"/>
<text x="349.4" y="310.1" font-size="5.4" fill="#8a8a8a" >5</text>
<text x="357.59999999999997" y="310.6" font-size="8" fill="#2a8ad2" >5</text>
<text x="414.0" y="310.7" font-size="7.8" fill="#141414" textLength="28.25" lengthAdjust="spacingAndGlyphs" stroke="#141414" stroke-width="0.2">JOHNNY</text>
<text x="471.2" y="310.7" font-size="7.8" fill="#141414" textLength="51.25" lengthAdjust="spacingAndGlyphs" stroke="#141414" stroke-width="0.2">LOLLOBRIGIDA</text>
<text x="528.4" y="310.7" font-size="7.8" fill="#141414" textLength="50.7" lengthAdjust="spacingAndGlyphs" stroke="#141414" stroke-width="0.2">2006-02-15...</text>
<rect x="354.7" y="312.95" width="375.3" height="10.65" fill="#eff4fc"/>
<rect x="354.7" y="323.09999999999997" width="375.3" height="0.5" fill="#dfe2e6"/>
<text x="349.4" y="320.75" font-size="5.4" fill="#8a8a8a" >6</text>
<text x="357.59999999999997" y="321.25" font-size="8" fill="#2a8ad2" >6</text>
<text x="414.0" y="321.34999999999997" font-size="7.8" fill="#141414" textLength="20.75" lengthAdjust="spacingAndGlyphs" stroke="#141414" stroke-width="0.2">BETTE</text>
<text x="471.2" y="321.34999999999997" font-size="7.8" fill="#141414" textLength="41.75" lengthAdjust="spacingAndGlyphs" stroke="#141414" stroke-width="0.2">NICHOLSON</text>
<text x="528.4" y="321.34999999999997" font-size="7.8" fill="#141414" textLength="50.7" lengthAdjust="spacingAndGlyphs" stroke="#141414" stroke-width="0.2">2006-02-15...</text>
<rect x="730" y="250.4" width="8.5" height="73.2" fill="#fbfbfb"/>
<rect x="730" y="250.4" width="0.5" height="73.2" fill="#dadada"/>
<rect x="339.5" y="323.4" width="390.5" height="4.9" fill="#f4f4f4"/>
<rect x="339.5" y="323.3" width="390.5" height="0.5" fill="#c8c8c8"/>
<rect x="339.5" y="327.7" width="390.5" height="0.7" fill="#a8a8a8"/>
<rect x="730" y="323.3" width="8.5" height="5" fill="#fbfbfb"/><rect x="730" y="323.3" width="0.5" height="5" fill="#dadada"/>
<rect x="339.5" y="328.3" width="399.0" height="73.30000000000001" fill="#fff"/>
<rect x="354.7" y="328.3" width="375.3" height="9.3" fill="url(#gHdr)"/>
<rect x="354.7" y="337.0" width="375.3" height="0.6" fill="#cfcfcf"/>
<rect x="339.5" y="328.3" width="15.199999999999989" height="73.2" fill="#f4f4f4"/>
<rect x="354.09999999999997" y="328.3" width="0.7" height="73.2" fill="#b8b8b8"/>
<text x="383.6" y="334.90000000000003" font-size="6.8" fill="#333" text-anchor="middle" stroke="#333" stroke-width="0.06">city_id</text>
<rect x="412.2" y="329.8" width="0.6" height="6.300000000000001" fill="#d0d0d0"/>
<text x="441.1" y="334.90000000000003" font-size="6.8" fill="#333" text-anchor="middle" stroke="#333" stroke-width="0.06">city</text>
<rect x="469.4" y="329.8" width="0.6" height="6.300000000000001" fill="#d0d0d0"/>
<text x="498.29999999999995" y="334.90000000000003" font-size="6.8" fill="#333" text-anchor="middle" stroke="#333" stroke-width="0.06">country_id</text>
<rect x="526.6" y="329.8" width="0.6" height="6.300000000000001" fill="#d0d0d0"/>
<text x="555.05" y="334.90000000000003" font-size="6.8" fill="#333" text-anchor="middle" stroke="#333" stroke-width="0.06">last_update</text>
<rect x="582.9000000000001" y="329.8" width="0.6" height="6.300000000000001" fill="#d0d0d0"/>
<rect x="354.7" y="347.75" width="375.3" height="0.5" fill="#dfe2e6"/>
<text x="349.4" y="345.40000000000003" font-size="5.4" fill="#8a8a8a" >1</text>
<text x="357.59999999999997" y="345.90000000000003" font-size="8" fill="#2a8ad2" >1</text>
<text x="414.0" y="346.0" font-size="7.8" fill="#141414" textLength="46.9" lengthAdjust="spacingAndGlyphs" stroke="#141414" stroke-width="0.2">A Corua (La...</text>
<text x="471.2" y="346.0" font-size="7.8" fill="#141414" textLength="7.7" lengthAdjust="spacingAndGlyphs" stroke="#141414" stroke-width="0.2">87</text>
<text x="528.4" y="346.0" font-size="7.8" fill="#141414" textLength="50.7" lengthAdjust="spacingAndGlyphs" stroke="#141414" stroke-width="0.2">2006-02-15...</text>
<rect x="354.7" y="348.25" width="375.3" height="10.65" fill="#eff4fc"/>
<rect x="354.7" y="358.4" width="375.3" height="0.5" fill="#dfe2e6"/>
<text x="349.4" y="356.05" font-size="5.4" fill="#8a8a8a" >2</text>
<text x="357.59999999999997" y="356.55" font-size="8" fill="#2a8ad2" >2</text>
<text x="414.0" y="356.65" font-size="7.8" fill="#141414" textLength="17.5" lengthAdjust="spacingAndGlyphs" stroke="#141414" stroke-width="0.2">Abha</text>
<text x="471.2" y="356.65" font-size="7.8" fill="#141414" textLength="7.7" lengthAdjust="spacingAndGlyphs" stroke="#141414" stroke-width="0.2">82</text>
<text x="528.4" y="356.65" font-size="7.8" fill="#141414" textLength="50.7" lengthAdjust="spacingAndGlyphs" stroke="#141414" stroke-width="0.2">2006-02-15...</text>
<rect x="354.7" y="369.05" width="375.3" height="0.5" fill="#dfe2e6"/>
<text x="349.4" y="366.70000000000005" font-size="5.4" fill="#8a8a8a" >3</text>
<text x="357.59999999999997" y="367.20000000000005" font-size="8" fill="#2a8ad2" >3</text>
<text x="414.0" y="367.3" font-size="7.8" fill="#141414" textLength="36.4" lengthAdjust="spacingAndGlyphs" stroke="#141414" stroke-width="0.2">Abu Dhabi</text>
<text x="471.2" y="367.3" font-size="7.8" fill="#141414" textLength="11.9" lengthAdjust="spacingAndGlyphs" stroke="#141414" stroke-width="0.2">101</text>
<text x="528.4" y="367.3" font-size="7.8" fill="#141414" textLength="50.7" lengthAdjust="spacingAndGlyphs" stroke="#141414" stroke-width="0.2">2006-02-15...</text>
<rect x="354.7" y="369.55" width="375.3" height="10.65" fill="#eff4fc"/>
<rect x="354.7" y="379.7" width="375.3" height="0.5" fill="#dfe2e6"/>
<text x="349.4" y="377.35" font-size="5.4" fill="#8a8a8a" >4</text>
<text x="357.59999999999997" y="377.85" font-size="8" fill="#2a8ad2" >4</text>
<text x="414.0" y="377.95" font-size="7.8" fill="#141414" textLength="16.8" lengthAdjust="spacingAndGlyphs" stroke="#141414" stroke-width="0.2">Acua</text>
<text x="471.2" y="377.95" font-size="7.8" fill="#141414" textLength="7.7" lengthAdjust="spacingAndGlyphs" stroke="#141414" stroke-width="0.2">60</text>
<text x="528.4" y="377.95" font-size="7.8" fill="#141414" textLength="50.7" lengthAdjust="spacingAndGlyphs" stroke="#141414" stroke-width="0.2">2006-02-15...</text>
<rect x="354.7" y="390.35" width="375.3" height="0.5" fill="#dfe2e6"/>
<text x="349.4" y="388.00000000000006" font-size="5.4" fill="#8a8a8a" >5</text>
<text x="357.59999999999997" y="388.50000000000006" font-size="8" fill="#2a8ad2" >5</text>
<text x="414.0" y="388.6" font-size="7.8" fill="#141414" textLength="21.4" lengthAdjust="spacingAndGlyphs" stroke="#141414" stroke-width="0.2">Adana</text>
<text x="471.2" y="388.6" font-size="7.8" fill="#141414" textLength="7.7" lengthAdjust="spacingAndGlyphs" stroke="#141414" stroke-width="0.2">97</text>
<text x="528.4" y="388.6" font-size="7.8" fill="#141414" textLength="50.7" lengthAdjust="spacingAndGlyphs" stroke="#141414" stroke-width="0.2">2006-02-15...</text>
<rect x="354.7" y="390.85" width="375.3" height="10.65" fill="#eff4fc"/>
<rect x="354.7" y="401.0" width="375.3" height="0.5" fill="#dfe2e6"/>
<text x="349.4" y="398.65000000000003" font-size="5.4" fill="#8a8a8a" >6</text>
<text x="357.59999999999997" y="399.15000000000003" font-size="8" fill="#2a8ad2" >6</text>
<text x="414.0" y="399.25" font-size="7.8" fill="#141414" textLength="43.4" lengthAdjust="spacingAndGlyphs" stroke="#141414" stroke-width="0.2">Addis Abeba</text>
<text x="471.2" y="399.25" font-size="7.8" fill="#141414" textLength="7.7" lengthAdjust="spacingAndGlyphs" stroke="#141414" stroke-width="0.2">31</text>
<text x="528.4" y="399.25" font-size="7.8" fill="#141414" textLength="50.7" lengthAdjust="spacingAndGlyphs" stroke="#141414" stroke-width="0.2">2006-02-15...</text>
<rect x="730" y="328.3" width="8.5" height="73.2" fill="#fbfbfb"/>
<rect x="730" y="328.3" width="0.5" height="73.2" fill="#dadada"/>
<rect x="203.5" y="401.6" width="535.0" height="17.299999999999955" fill="url(#gStatus)"/>
<rect x="203.5" y="401.4" width="535.0" height="0.6" fill="#8a8a8a"/>
<rect x="203.5" y="402" width="535.0" height="0.6" fill="#e4e4e4"/>
<text x="489" y="413.2" font-size="7.9" fill="#808080" textLength="99" lengthAdjust="spacing" stroke="#808080" stroke-width="0.08">800 records. 0.339 seconds.</text>
</g>
</svg></body></html>
